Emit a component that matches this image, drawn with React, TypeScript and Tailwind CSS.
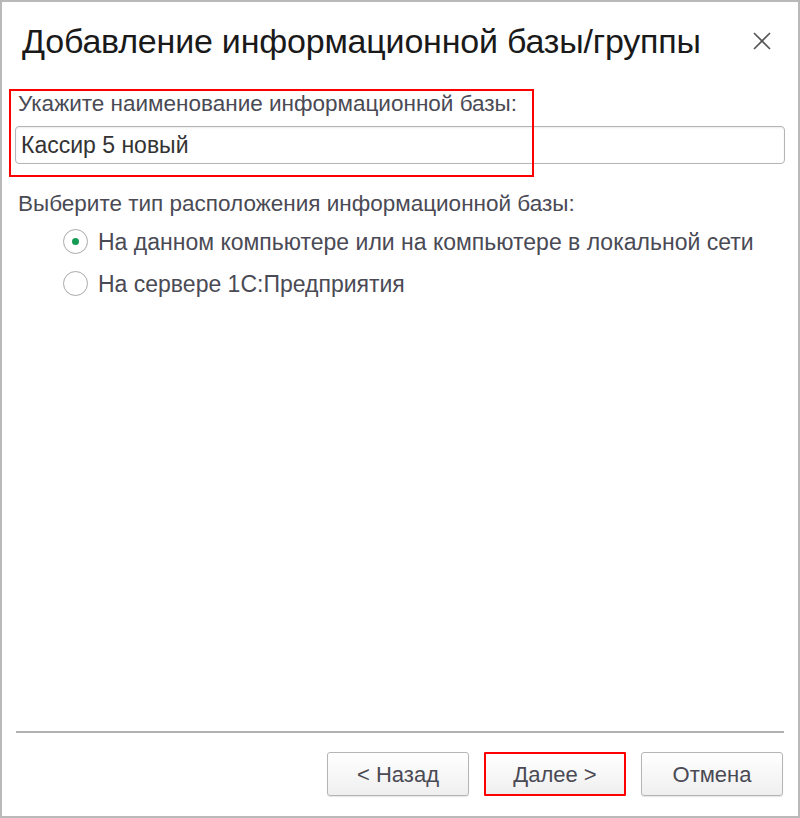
import React from "react";

export default function App() {
  const font = { fontFamily: '"Liberation Sans", Arial, sans-serif' };
  return (
    <div
      className="w-[800px] h-[818px] bg-white border-2 border-[#b9b9b9] flex flex-col"
      style={font}
    >
      {/* Header */}
      <div className="flex items-center justify-between h-[80px] pl-[20px] pr-[26px] pb-[2px]">
        <h1 className="text-[34px] leading-none text-[#1a1a1a] tracking-[-0.2px]">
          Добавление информационной базы/группы
        </h1>
        <svg width="20" height="20" viewBox="0 0 20 20" className="text-[#555]">
          <path d="M2 2 L18 18 M18 2 L2 18" stroke="currentColor" strokeWidth="1.6" />
        </svg>
      </div>

      {/* Body */}
      <div className="flex-1 flex flex-col px-[13px]">
        <div className="relative pt-[10px]">
          <div className="absolute left-[-6px] top-[7px] w-[525px] h-[88px] border-2 border-[#ff0000] pointer-events-none" />
          <div className="pl-[3px] text-[22.5px] leading-[24px] text-[#4a4a55]">
            Укажите наименование информационной базы:
          </div>
          <div className="mt-[10px] h-[38px] rounded-[4px] border-[1.5px] border-[#b4b4b4] shadow-[inset_0_1px_2px_rgba(0,0,0,0.08)] flex items-center pl-[5px] text-[23px] text-[#333]">
            Кассир 5 новый
          </div>
        </div>

        <div className="mt-[28px] pl-[3px] text-[22.5px] leading-[24px] text-[#4a4a55]">
          Выберите тип расположения информационной базы:
        </div>

        <div className="mt-[13px] pl-[48px] flex flex-col gap-[17px]">
          <div className="flex items-center gap-[10px]">
            <div className="w-[25px] h-[25px] rounded-full border-[1.5px] border-[#a9a9a9] flex items-center justify-center">
              <div className="w-[7px] h-[7px] rounded-full bg-[#169b55]" />
            </div>
            <span className="text-[23px] leading-[24px] text-[#4a4a55]">
              На данном компьютере или на компьютере в локальной сети
            </span>
          </div>
          <div className="flex items-center gap-[10px]">
            <div className="w-[25px] h-[25px] rounded-full border-[1.5px] border-[#a9a9a9]" />
            <span className="text-[23px] leading-[24px] text-[#4a4a55]">
              На сервере 1С:Предприятия
            </span>
          </div>
        </div>

        <div className="flex-1" />

        <div className="h-[2px] bg-[#b0b0b0] mx-[1px]" />

        <div className="flex justify-end gap-[15px] pt-[19px] pb-[20px] pr-[2px]">
          <button className="w-[142px] h-[44px] rounded-[3px] border border-[#b5b5b5] bg-gradient-to-b from-white to-[#efefef] text-[22px] text-[#4a4a55] shadow-[0_1px_1px_rgba(0,0,0,0.1)]">
            &lt; Назад
          </button>
          <button className="w-[142px] h-[44px] rounded-[1px] border-2 border-[#ff0000] bg-gradient-to-b from-white to-[#efefef] text-[22px] text-[#4a4a55]">
            Далее &gt;
          </button>
          <button className="w-[142px] h-[44px] rounded-[3px] border border-[#b5b5b5] bg-gradient-to-b from-white to-[#efefef] text-[22px] text-[#4a4a55] shadow-[0_1px_1px_rgba(0,0,0,0.1)]">
            Отмена
          </button>
        </div>
      </div>
    </div>
  );
}
